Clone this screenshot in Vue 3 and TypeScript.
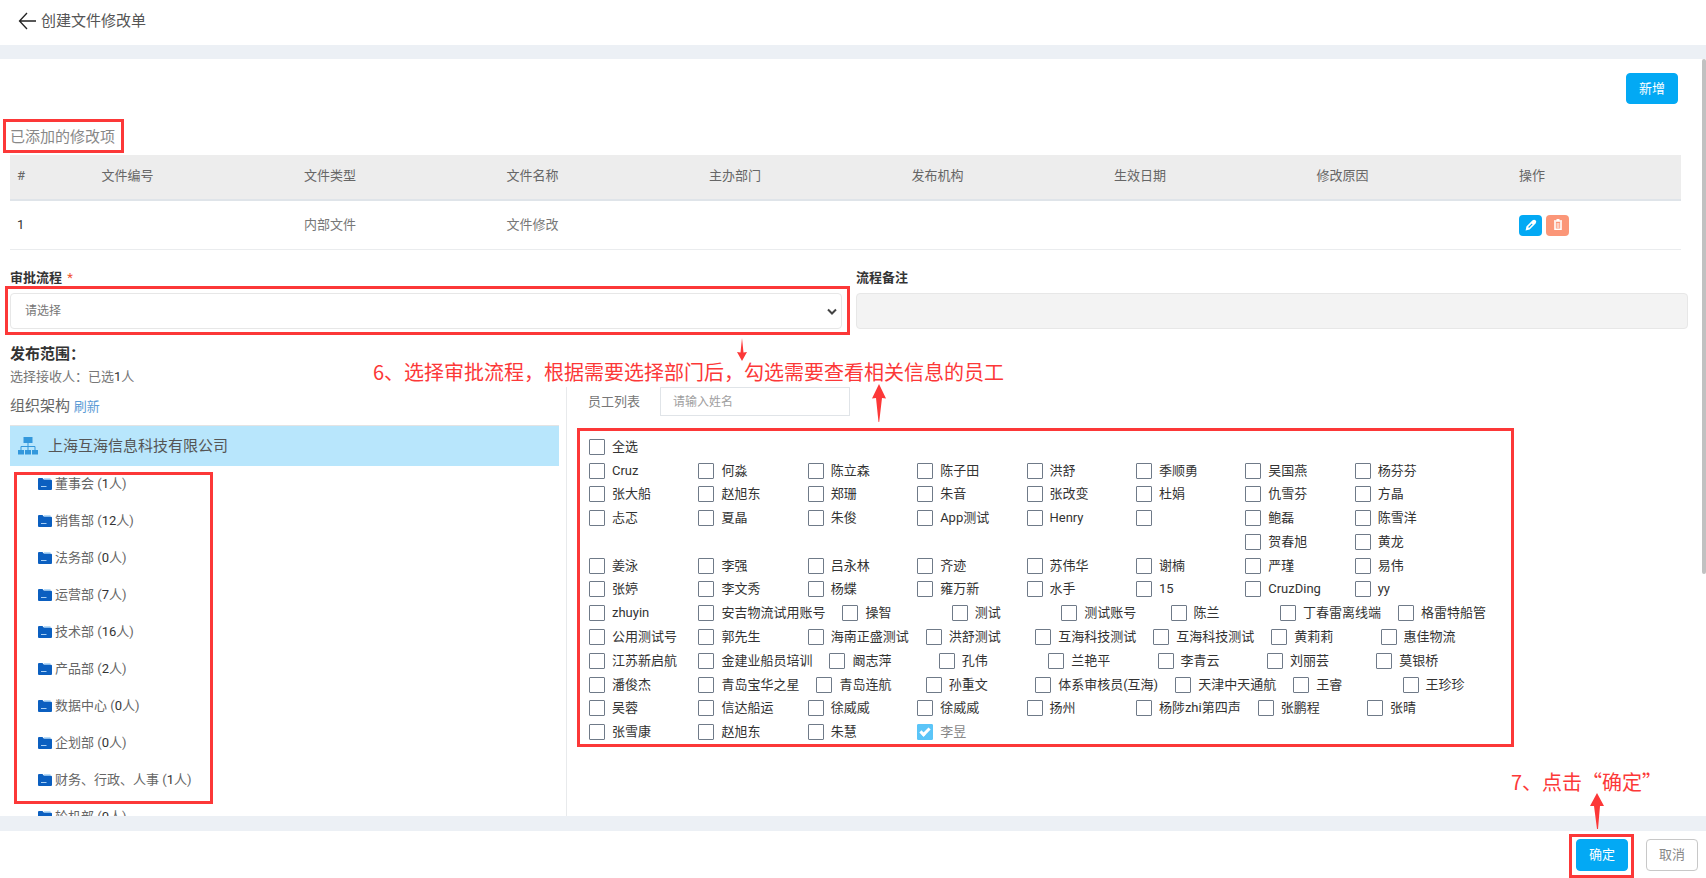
<script setup lang="ts">
import { ref } from 'vue'

interface Person {
  id: string
  name: string
  picked: boolean
}

const columns: string[] = ['#', '文件编号', '文件类型', '文件名称', '主办部门', '发布机构', '生效日期', '修改原因', '操作']

const departments: [string, number][] = [
  ['董事会', 1],
  ['销售部', 12],
  ['法务部', 0],
  ['运营部', 7],
  ['技术部', 16],
  ['产品部', 2],
  ['数据中心', 0],
  ['企划部', 0],
  ['财务、行政、人事', 1],
  ['轮机部', 0],
]

const names: (string | null)[][] = [
  ['Cruz', '何淼', '陈立森', '陈子田', '洪舒', '季顺勇', '吴国燕', '杨芬芬'],
  ['张大船', '赵旭东', '郑珊', '朱音', '张改变', '杜娟', '仇雪芬', '方晶'],
  ['忐忑', '夏晶', '朱俊', 'App测试', 'Henry', '', '鲍磊', '陈雪洋'],
  [null, null, null, null, null, null, '贺春旭', '黄龙'],
  ['姜泳', '李强', '吕永林', '齐迹', '苏伟华', '谢楠', '严瑾', '易伟'],
  ['张婷', '李文秀', '杨蝶', '雍万新', '水手', '15', 'CruzDing', 'yy'],
  ['zhuyin', '安吉物流试用账号', '操智', '测试', '测试账号', '陈兰', '丁春雷离线端', '格雷特船管'],
  ['公用测试号', '郭先生', '海南正盛测试', '洪舒测试', '互海科技测试', '互海科技测试', '黄莉莉', '惠佳物流'],
  ['江苏新启航', '金建业船员培训', '阚志萍', '孔伟', '兰艳平', '李青云', '刘丽芸', '莫银桥'],
  ['潘俊杰', '青岛宝华之星', '青岛连航', '孙重文', '体系审核员(互海)', '天津中天通航', '王睿', '王珍珍'],
  ['吴蓉', '信达船运', '徐威威', '徐威威', '扬州', '杨陟zhi第四声', '张鹏程', '张晴'],
  ['张雪康', '赵旭东', '朱慧', '李昱'],
]

const people = ref<(Person | null)[][]>(
  names.map((row, r) =>
    row.map((name, c) => (name === null ? null : { id: `p-${r}-${c}`, name, picked: name === '李昱' })),
  ),
)
const all = ref(false)
const flow = ref('')
const remark = ref('')
const keyword = ref('')
</script>

<template>
  <div class="page">
    <header class="topbar">
      <button class="back" type="button" aria-label="返回">
        <svg width="18" height="18" viewBox="0 0 18 18" fill="none" stroke="#222" stroke-width="1.3">
          <path d="M9 1 1.5 9 9 17M1.5 9H18" />
        </svg>
      </button>
      <h1>创建文件修改单</h1>
    </header>

    <main class="content">
      <div class="toolbar"><button class="btn primary" type="button">新增</button></div>

      <h2 class="caption"><span class="mark mark-caption">已添加的修改项</span></h2>

      <table class="items">
        <colgroup>
          <col class="c-index" />
          <col v-for="n in 7" :key="n" class="c-text" />
          <col class="c-ops" />
        </colgroup>
        <thead>
          <tr><th v-for="c in columns" :key="c" scope="col">{{ c }}</th></tr>
        </thead>
        <tbody>
          <tr>
            <td class="index">1</td>
            <td></td>
            <td>内部文件</td>
            <td>文件修改</td>
            <td></td>
            <td></td>
            <td></td>
            <td></td>
            <td>
              <div class="ops">
                <button class="op edit" type="button" aria-label="编辑">
                  <svg width="12" height="12" viewBox="0 0 12 12">
                    <path fill="#fff" fill-rule="evenodd" d="M.6 11.4 1.4 7.6 7.3 1.5Q9 0 10.6 1.3 12 2.8 10.6 4.4L4.6 10.4ZM3.2 8.1 4 8.900 7.600 5.300 6.800 4.500Z" />
                  </svg>
                </button>
                <button class="op remove" type="button" aria-label="删除">
                  <svg width="10" height="12" viewBox="0 0 10 12" fill="none" stroke="#fff">
                    <path d="M1 2H9M3.5 .8H6.5" stroke-width="1.5" />
                    <path d="M2 2.5V10.2H8V2.5" stroke-width="1.6" />
                    <path d="M4.200 4V9M5.800 4V9" stroke-width=".8" />
                  </svg>
                </button>
              </div>
            </td>
          </tr>
        </tbody>
      </table>

      <div class="form">
        <div class="field">
          <label for="flow">审批流程 <span class="star">*</span></label>
          <div class="select-wrap mark mark-select">
            <select id="flow" v-model="flow">
              <option value="">请选择</option>
            </select>
            <svg class="chevron" width="10" height="8" viewBox="0 0 10 8" fill="none" stroke="#444" stroke-width="2">
              <path d="M1 1.5 5 5.5 9 1.5" />
            </svg>
          </div>
        </div>
        <div class="field">
          <label for="remark">流程备注</label>
          <input id="remark" v-model="remark" type="text" disabled />
        </div>
      </div>

      <section class="scope">
        <h2 class="scope-title">发布范围：</h2>
        <p class="receivers">选择接收人：已选<b>1</b>人</p>

        <div class="split">
          <div class="org">
            <div class="org-head">组织架构 <a href="#">刷新</a></div>
            <div class="company">
              <svg width="20" height="18" viewBox="0 0 20 18">
                <path fill="none" stroke="#3398dc" d="M10 6V13M3 13V9.5H17V13" />
                <path fill="#3398dc" d="M5.5 0H14.5V6H5.5ZM0 13H6V17.500H0ZM7 13H13V17.500H7ZM14 13H20V17.500H14Z" />
              </svg>
              上海互海信息科技有限公司
            </div>
            <div class="tree-wrap">
              <ul class="tree">
                <li v-for="d in departments" :key="d[0]">
                  <svg width="14" height="12" viewBox="0 0 14 12">
                    <path fill="#b9dcf8" d="M6 0H12.500V3H6Z" />
                    <path fill="#0b5fc0" d="M1 0H4.500L6 1.800H13Q14 1.800 14 2.800V11Q14 12 13 12H1Q0 12 0 11V1Q0 0 1 0Z" />
                    <path stroke="#a8d0f5" d="M3 8.500H8.500" />
                  </svg>
                  <span>{{ d[0] }} (<b>{{ d[1] }}</b>人)</span>
                </li>
              </ul>
              <div class="tree-frame"></div>
            </div>
          </div>

          <div class="staff">
            <div class="search">
              <label for="keyword">员工列表</label>
              <input id="keyword" v-model="keyword" type="text" placeholder="请输入姓名" />
            </div>
            <div class="people">
              <div class="row">
                <label class="person"><input v-model="all" type="checkbox" /><span>全选</span></label>
              </div>
              <div v-for="(row, r) in people" :key="r" class="row">
                <template v-for="(p, c) in row" :key="c">
                  <label v-if="p" class="person" :class="{ picked: p.picked }" :for="p.id">
                    <input :id="p.id" v-model="p.picked" type="checkbox" :aria-label="p.name || '未命名'" />
                    <span>{{ p.name }}</span>
                  </label>
                  <span v-else class="person"></span>
                </template>
              </div>
            </div>
          </div>
        </div>

        <div class="note note-flow">6、选择审批流程，根据需要选择部门后，勾选需要查看相关信息的员工</div>
        <svg class="arrow arrow-down" width="10" height="23" viewBox="0 0 10 23">
          <path fill="#fc3838" d="M5 0 6.500 14.500 10 14 5 23 0 14 3.500 14.500Z" />
        </svg>
        <svg class="arrow arrow-up" width="14" height="38" viewBox="0 0 14 38">
          <path fill="#fc3838" d="M7 0 14 14.500 10 14 7.200 38H6.500L4 14 0 14.500Z" />
        </svg>
      </section>

      <div class="thumb"></div>
    </main>

    <footer class="footer">
      <div class="confirm mark mark-confirm">
        <button class="btn primary" type="button">确定</button>
        <div class="note note-confirm">7、点击“确定”</div>
        <svg class="arrow arrow-confirm" width="14" height="36" viewBox="0 0 14 36">
          <path fill="#fc3838" d="M7 0 14 13 10 13 8 36H7L4 13 0 13Z" />
        </svg>
      </div>
      <button class="btn plain" type="button">取消</button>
    </footer>
  </div>
</template>

<style>
body {
  margin: 0;
}
</style>

<style scoped>
* {
  box-sizing: border-box;
}
.page {
  display: flex;
  flex-direction: column;
  height: 100vh;
  overflow: hidden;
  background: #ecf0f5;
  color: #666;
  font-family: Roboto, 'Noto Sans CJK SC', sans-serif;
  font-size: 13px;
  line-height: 20px;
}
button,
input,
select {
  font-family: inherit;
  font-size: 13px;
}
h1,
h2,
p,
ul {
  margin: 0;
  padding: 0;
  font-weight: 400;
}
b {
  font-weight: 400;
  color: #333;
}

.topbar {
  display: flex;
  align-items: center;
  gap: 5px;
  flex: none;
  height: 45px;
  padding: 0 18px 3px;
  background: #fff;
}
.topbar h1 {
  font-size: 15px;
  color: #555;
}
.back {
  display: flex;
  padding: 0;
  border: 0;
  background: none;
}

.content {
  position: relative;
  flex: 1;
  min-height: 0;
  margin: 14px 0 15px;
  padding: 14px 18px 0 10px;
  overflow: hidden;
  background: #fff;
}
.thumb {
  position: absolute;
  top: 0;
  right: 0;
  width: 4px;
  height: 68%;
  border-radius: 3px;
  background: #c1c1c1;
}
.toolbar {
  display: flex;
  justify-content: flex-end;
  padding-right: 10px;
}
.btn {
  height: 31px;
  padding: 0 12px;
  border: 1px solid #03a9f4;
  border-radius: 4px;
  line-height: 20px;
}
.primary {
  background: #03a9f4;
  color: #fff;
}
.plain {
  border-color: #c8c8c8;
  background: #fff;
  color: #888;
}

.mark {
  position: relative;
}
.mark::after {
  content: '';
  position: absolute;
  border: 3px solid #fc3838;
  pointer-events: none;
}
.mark-caption::after {
  inset: -7px -9px -5px -7px;
}
.mark-select::after {
  inset: -7px -8px -6px -5px;
}
.mark-confirm::after {
  inset: -5px -6px -7px -7px;
}

.caption {
  margin: 22px 0 7px;
  font-size: 15px;
  line-height: 22px;
  color: #888;
}
.caption span {
  display: inline-block;
}

.items {
  width: calc(100% - 7px);
  border-collapse: separate;
  border-spacing: 0;
  table-layout: fixed;
}
.c-index {
  width: 5%;
}
.c-text {
  width: 12%;
}
.c-ops {
  width: 10%;
}
.items th,
.items td {
  padding: 0 7px;
  text-align: left;
  font-weight: 400;
}
.items th {
  height: 46px;
  padding-bottom: 2px;
  border-bottom: 2px solid #dfe4e9;
  background: #ededed;
}
.items td {
  height: 49px;
  border-bottom: 1px solid #eaecee;
  color: #777;
}
.items .index {
  color: #333;
}
.ops {
  display: flex;
  gap: 4px;
}
.op {
  display: flex;
  justify-content: center;
  width: 23px;
  height: 21px;
  padding: 4px 0 0;
  border: 0;
  border-radius: 4px;
}
.edit {
  background: #03a9f4;
}
.remove {
  background: #fb9678;
}

.form {
  display: grid;
  grid-template-columns: 1fr 1fr;
  gap: 14px;
  margin-top: 18px;
}
.field label {
  display: block;
  margin-bottom: 5px;
  font-weight: 700;
  color: #333;
}
.star {
  margin-left: 2px;
  font-weight: 400;
  color: #f0522d;
}
.field select,
.field input {
  display: block;
  width: 100%;
  height: 36px;
  padding: 0 14px;
  border: 1px solid #e7e7e7;
  border-radius: 4px;
  background: #fff;
  color: #777;
  font-size: 12px;
  appearance: none;
}
.field input {
  background: #f3f3f3;
}
.chevron {
  position: absolute;
  top: 15px;
  right: 5px;
}

.scope {
  position: relative;
  margin-top: 14px;
  padding-right: 7px;
}
.scope-title {
  font-size: 15px;
  font-weight: 700;
  line-height: 22px;
  color: #333;
}
.receivers {
  margin-top: 2px;
  color: #777;
}
.split {
  display: grid;
  grid-template-columns: 1fr 2fr;
}
.org {
  padding: 8px 8px 0 0;
}
.org-head {
  font-size: 15px;
  line-height: 22px;
}
.org-head a {
  font-size: 13px;
  color: #5b9bd5;
  text-decoration: none;
}
.company {
  display: flex;
  align-items: center;
  gap: 10px;
  height: 41px;
  margin-top: 7px;
  padding-left: 8px;
  border-top: 1px solid #e4e4e4;
  background: #b8e6fc;
  font-size: 15px;
  color: #555;
}
.tree-wrap {
  position: relative;
  margin-top: -1px;
}
.tree {
  list-style: none;
}
.tree li {
  display: flex;
  align-items: center;
  gap: 3px;
  height: 37px;
  padding-left: 28px;
}
.tree-frame {
  position: absolute;
  top: 7px;
  left: 4px;
  width: 199px;
  height: 332px;
  border: 3px solid #fc3838;
}

.staff {
  margin-left: -1px;
  padding-left: 10px;
  border-left: 1px solid #e8eaec;
}
.search {
  display: flex;
  align-items: center;
  gap: 20px;
  padding-left: 11px;
  color: #777;
}
.search input {
  width: 190px;
  height: 29px;
  padding: 0 12px;
  border: 1px solid #e0e4e8;
  font-size: 12px;
}
.search input::placeholder {
  color: #a0a0a0;
}
.people {
  display: grid;
  grid-template-rows: repeat(13, 1fr);
  max-width: 937px;
  min-height: 319px;
  margin-top: 12px;
  padding: 4px 47px 0 9px;
  border: 3px solid #fc3838;
}
.row {
  display: flex;
  align-items: center;
}
.person {
  display: flex;
  align-items: center;
  flex: none;
  gap: 7px;
  min-width: 12.5%;
  padding-right: 17px;
  color: #333;
  white-space: nowrap;
}
.person input {
  position: relative;
  flex: none;
  width: 16px;
  height: 16px;
  margin: 0;
  border: 1px solid #6f7a88;
  border-radius: 1px;
  background: #fff;
  appearance: none;
}
.person input:checked {
  border-color: #5bc5f8;
  background: #5bc5f8;
}
.person input:checked::after {
  content: '';
  position: absolute;
  top: 3px;
  left: 2px;
  box-sizing: border-box;
  width: 10px;
  height: 6px;
  border: solid #fff;
  border-width: 0 0 3px 3px;
  transform: rotate(-45deg);
}
.picked {
  color: #888;
}

.note {
  position: absolute;
  color: #fc3838;
  font-family: 'Noto Sans CJK SC', sans-serif;
  font-size: 20px;
  line-height: 28px;
  white-space: nowrap;
}
.arrow {
  position: absolute;
}
.note-flow {
  top: 15px;
  left: 363px;
}
.arrow-down {
  top: -5px;
  left: 727px;
}
.arrow-up {
  top: 41px;
  left: 862px;
}

.footer {
  display: flex;
  align-items: flex-start;
  justify-content: flex-end;
  gap: 18px;
  flex: none;
  height: 47px;
  padding: 8px 8px 0;
  background: #fff;
}
.footer .btn {
  height: 32px;
}
.confirm {
  display: flex;
}
.note-confirm {
  top: -71px;
  right: -34px;
}
.arrow-confirm {
  top: -46px;
  left: 14px;
}
</style>
